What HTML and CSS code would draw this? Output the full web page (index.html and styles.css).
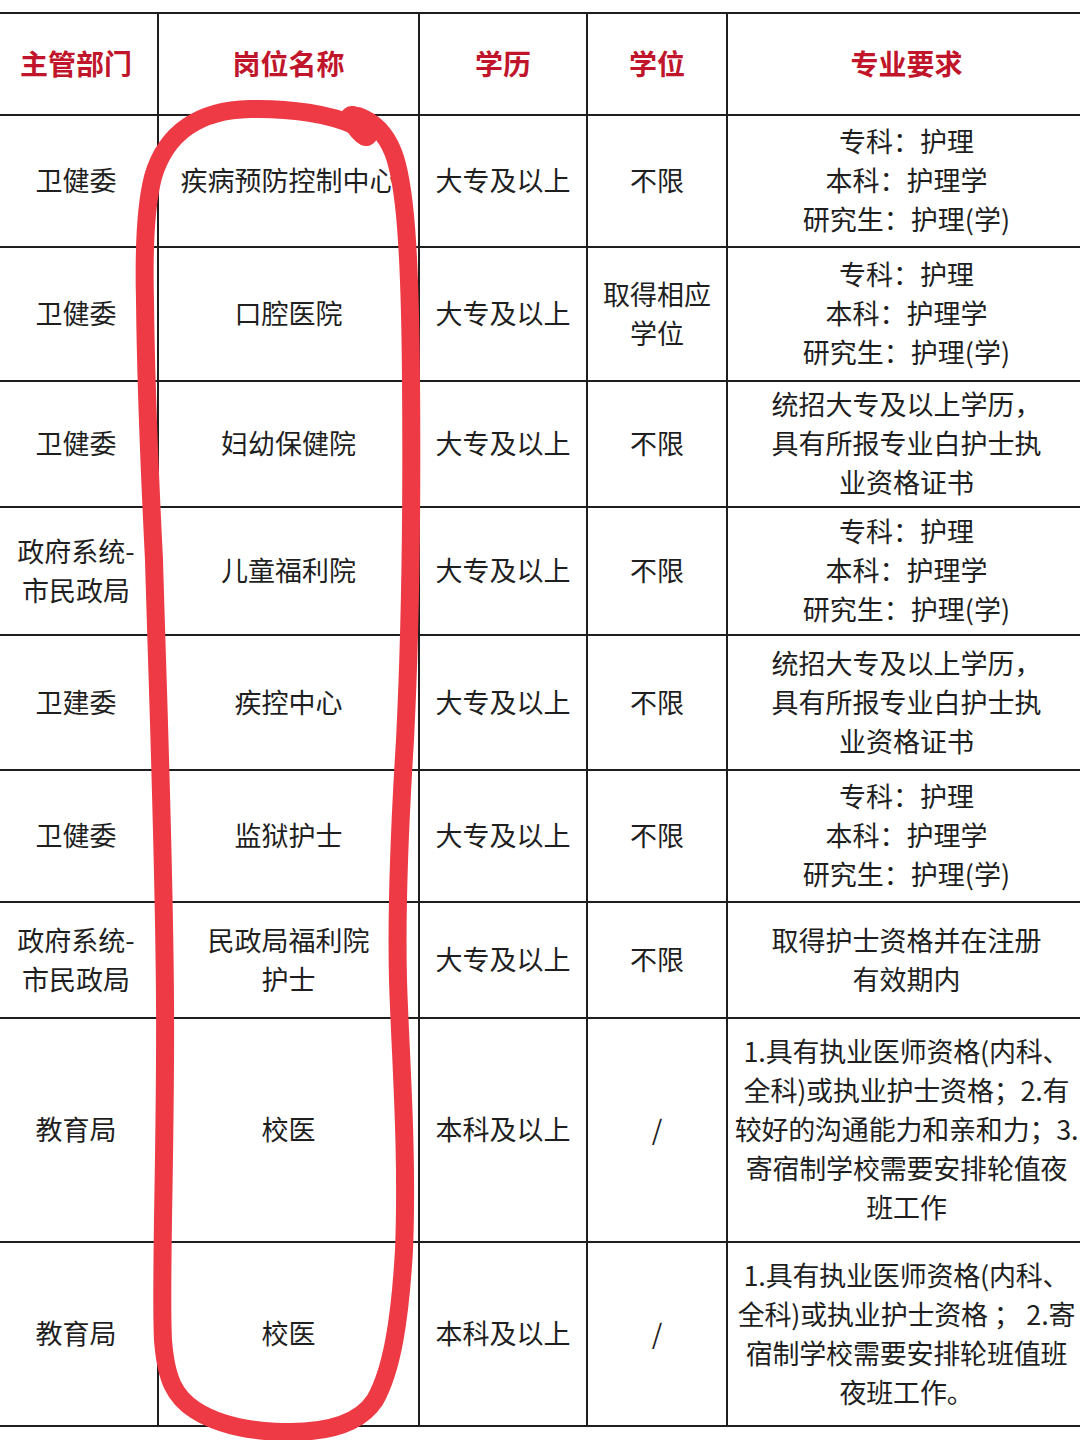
FILE: index.html
```html
<!DOCTYPE html>
<html lang="zh-CN">
<head>
<meta charset="utf-8">
<title>岗位表</title>
<link rel="stylesheet" href="styles.css">
</head>
<body>
<div class="page">
  <table class="jobs">
    <colgroup>
      <col class="c1"><col class="c2"><col class="c3"><col class="c4"><col class="c5">
    </colgroup>
    <thead>
      <tr class="h-head"><th>主管部门</th><th>岗位名称</th><th>学历</th><th>学位</th><th>专业要求</th></tr>
    </thead>
    <tbody>
      <tr class="h132"><td>卫健委</td><td>疾病预防控制中心</td><td>大专及以上</td><td>不限</td><td>专科：护理<br>本科：护理学<br>研究生：护理(学)</td></tr>
      <tr class="h134"><td>卫健委</td><td>口腔医院</td><td>大专及以上</td><td>取得相应<br>学位</td><td>专科：护理<br>本科：护理学<br>研究生：护理(学)</td></tr>
      <tr class="h126"><td>卫健委</td><td>妇幼保健院</td><td>大专及以上</td><td>不限</td><td>统招大专及以上学历，<br>具有所报专业白护士执<br>业资格证书</td></tr>
      <tr class="h128"><td>政府系统-<br>市民政局</td><td>儿童福利院</td><td>大专及以上</td><td>不限</td><td>专科：护理<br>本科：护理学<br>研究生：护理(学)</td></tr>
      <tr class="h135"><td>卫建委</td><td>疾控中心</td><td>大专及以上</td><td>不限</td><td>统招大专及以上学历，<br>具有所报专业白护士执<br>业资格证书</td></tr>
      <tr class="h132"><td>卫健委</td><td>监狱护士</td><td>大专及以上</td><td>不限</td><td>专科：护理<br>本科：护理学<br>研究生：护理(学)</td></tr>
      <tr class="h116"><td>政府系统-<br>市民政局</td><td>民政局福利院<br>护士</td><td>大专及以上</td><td>不限</td><td>取得护士资格并在注册<br>有效期内</td></tr>
      <tr class="h224"><td>教育局</td><td>校医</td><td>本科及以上</td><td>/</td><td class="long">1.具有执业医师资格(内科、<br>全科)或执业护士资格；2.有<br>较好的沟通能力和亲和力；3.<br>寄宿制学校需要安排轮值夜<br>班工作</td></tr>
      <tr class="h184"><td>教育局</td><td>校医</td><td>本科及以上</td><td>/</td><td class="long">1.具有执业医师资格(内科、<br>全科)或执业护士资格 ； 2.寄<br>宿制学校需要安排轮班值班<br>夜班工作。</td></tr>
    </tbody>
  </table>
  <svg class="loop" width="1080" height="1440" viewBox="0 0 1080 1440" aria-hidden="true">
    <path d="M 356 126 C 330 114 290 108 250 109 C 200 110 166 132 153 177 C 144 212 144 260 145 300 C 146 400 150 480 154 560 C 158 700 164 850 165 1000 C 166 1150 160 1280 163 1340 C 166 1380 175 1397 195 1410 C 220 1426 255 1432 290 1432 C 335 1432 362 1420 375 1400 C 392 1370 400 1320 404 1250 C 408 1150 400 1050 398 980 C 396 900 400 820 405 740 C 410 640 412 500 411 380 C 410 250 405 182 393 152 C 385 132 372 121 358 116" />
    <path class="blob" d="M 352 118 C 358 126 362 132 366 134" />
  </svg>
</div>
</body>
</html>
```

FILE: styles.css
```css
html, body {
  margin: 0;
  padding: 0;
  background: #ffffff;
}

.page {
  position: relative;
  width: 1080px;
  height: 1440px;
  overflow: hidden;
  padding-top: 12px;
  box-sizing: border-box;
}

.jobs {
  margin-left: -7px;
  width: 1092px;
  table-layout: fixed;
  border-collapse: collapse;
  font-family: "Noto Sans CJK SC", "Noto Sans", sans-serif;
  color: #1f1f1f;
}

.c1 { width: 164px; }
.c2 { width: 261px; }
.c3 { width: 168px; }
.c4 { width: 140px; }
.c5 { width: 359px; }

.jobs th,
.jobs td {
  border: 2px solid #1e1e1e;
  padding: 0 0 3px 0;
  text-align: center;
  vertical-align: middle;
  font-size: 27px;
  line-height: 39px;
  white-space: nowrap;
  overflow: hidden;
}

.jobs th {
  font-size: 28px;
  font-weight: 700;
  color: #c0152a;
  padding-bottom: 2px;
}

.jobs td.long {
  letter-spacing: -0.2px;
}

.h-head { height: 102px; }
.h116 { height: 116px; }
.h126 { height: 126px; }
.h128 { height: 128px; }
.h132 { height: 132px; }
.h134 { height: 134px; }
.h135 { height: 135px; }
.h184 { height: 184px; }
.h224 { height: 224px; }

.loop {
  position: absolute;
  left: 0;
  top: 0;
  pointer-events: none;
}

.loop path {
  fill: none;
  stroke: #ee3a44;
  stroke-width: 18;
  stroke-linecap: round;
  stroke-linejoin: round;
}

.loop path.blob {
  stroke-width: 24;
}
```
